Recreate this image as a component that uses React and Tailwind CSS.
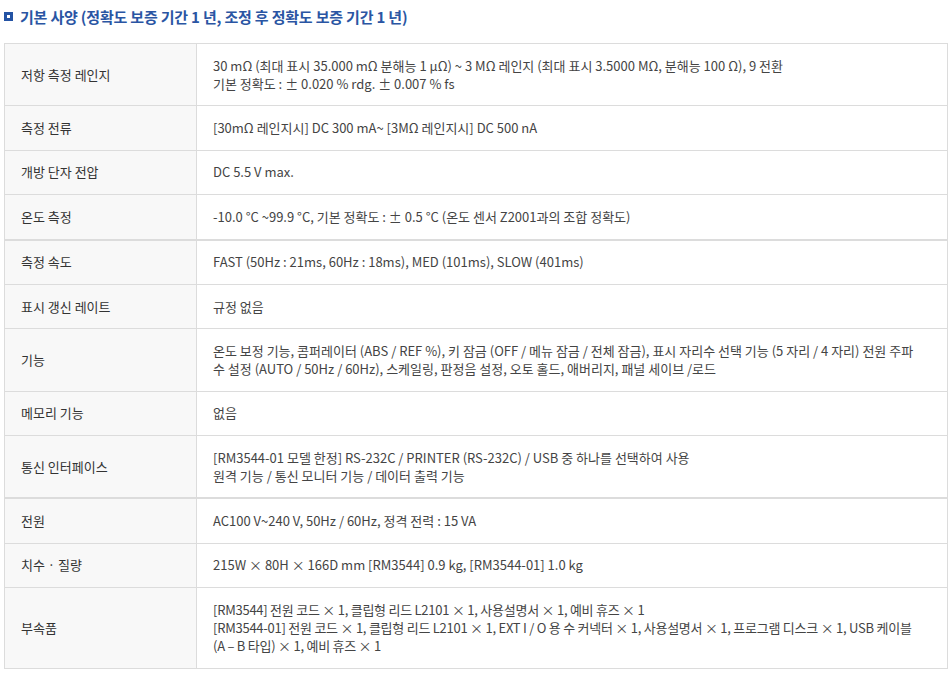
import React from 'react';

const groups = [
  [
    ['저항 측정 레인지', ['30 mΩ (최대 표시 35.000 mΩ 분해능 1 μΩ) ~ 3 MΩ 레인지 (최대 표시 3.5000 MΩ, 분해능 100 Ω), 9 전환', '기본 정확도 : ± 0.020 % rdg. ± 0.007 % fs']],
    ['측정 전류', ['[30mΩ 레인지시] DC 300 mA~ [3MΩ 레인지시] DC 500 nA']],
    ['개방 단자 전압', ['DC 5.5 V max.']],
    ['온도 측정', ['-10.0 °C ~99.9 °C, 기본 정확도 : ± 0.5 °C (온도 센서 Z2001과의 조합 정확도)']],
  ],
  [
    ['측정 속도', ['FAST (50Hz : 21ms, 60Hz : 18ms), MED (101ms), SLOW (401ms)']],
    ['표시 갱신 레이트', ['규정 없음']],
    ['기능', ['온도 보정 기능, 콤퍼레이터 (ABS / REF %), 키 잠금 (OFF / 메뉴 잠금 / 전체 잠금), 표시 자리수 선택 기능 (5 자리 / 4 자리) 전원 주파수 설정 (AUTO / 50Hz / 60Hz), 스케일링, 판정음 설정, 오토 홀드, 애버리지, 패널 세이브 /로드']],
    ['메모리 기능', ['없음']],
    ['통신 인터페이스', ['[RM3544-01 모델 한정] RS-232C / PRINTER (RS-232C) / USB 중 하나를 선택하여 사용', '원격 기능 / 통신 모니터 기능 / 데이터 출력 기능']],
  ],
  [
    ['전원', ['AC100 V~240 V, 50Hz / 60Hz, 정격 전력 : 15 VA']],
    ['치수 · 질량', ['215W × 80H × 166D mm [RM3544] 0.9 kg, [RM3544-01] 1.0 kg']],
    ['부속품', ['[RM3544] 전원 코드 × 1, 클립형 리드 L2101 × 1, 사용설명서 × 1, 예비 휴즈 × 1', '[RM3544-01] 전원 코드 × 1, 클립형 리드 L2101 × 1, EXT I / O 용 수 커넥터 × 1, 사용설명서 × 1, 프로그램 디스크 × 1, USB 케이블 (A – B 타입) × 1, 예비 휴즈 × 1'], true],
  ],
];

const App = () => {
  return (
    <div className="w-[951px] min-h-[676px] bg-white text-[#444] text-[13px] leading-[18px]" style={{ fontFamily: '"Noto Sans CJK KR", "Noto Sans", sans-serif' }}>
      <div className="flex items-start gap-[7px] pl-[4px] pt-[8px] h-[43px]">
        <span className="mt-[4px] w-[9px] h-[9px] bg-[#2453a4] flex items-center justify-center">
          <span className="w-[3px] h-[3px] bg-white" />
        </span>
        <h2 className="text-[15px] leading-[18px] font-bold text-[#2a55a3] tracking-[-0.2px]">기본 사양 (정확도 보증 기간 1 년, 조정 후 정확도 보증 기간 1 년)</h2>
      </div>
      <table className="ml-[4px] w-[944px] border-collapse">
        <colgroup>
          <col className="w-[192px]" />
          <col />
        </colgroup>
        {groups.map((rows, gi) => (
          <tbody key={gi}>
            {rows.map(([label, lines, narrow], ri) => (
              <tr key={ri}>
                <th className={`bg-[#f8f8f8] border border-[#dcdcdc] text-left font-normal text-[#333] pl-[16px] pr-3 py-[12.7px] ${gi > 0 && ri === 0 ? 'border-t-2' : ''}`}>
                  {label}
                </th>
                <td className={`border border-[#dcdcdc] pl-[16px] pr-[23px] py-[12.7px] text-[#444] ${gi > 0 && ri === 0 ? 'border-t-2' : ''} ${narrow ? 'tracking-[-0.25px]' : ''}`}>
                  {lines.map((l, li) => (
                    <div key={li}>{l}</div>
                  ))}
                </td>
              </tr>
            ))}
          </tbody>
        ))}
      </table>
    </div>
  );
};

export default App;
